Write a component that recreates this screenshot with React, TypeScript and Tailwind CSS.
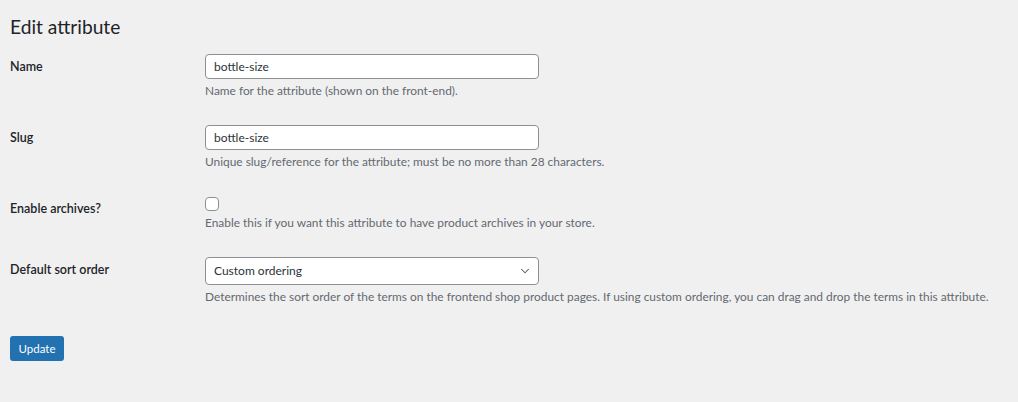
import { ChevronDown } from "lucide-react";

const font = { fontFamily: 'Lato, "Liberation Sans", sans-serif' };

function Row({
  label,
  children,
  note,
  className,
}: {
  label: string;
  children: React.ReactNode;
  note: string;
  className?: string;
}) {
  return (
    <div className={"flex items-start " + (className ?? "")}>
      <div className="w-[195px] shrink-0 pt-[5px] text-[12.5px] font-semibold leading-[16px] text-[#1d2327]">
        {label}
      </div>
      <div className="flex flex-col">
        {children}
        <p className="mt-[3px] whitespace-nowrap text-[11.9px] leading-[18px] text-[#646970]">{note}</p>
      </div>
    </div>
  );
}

export default function App() {
  return (
    <div className="min-h-[402px] w-full bg-[#f0f0f1] px-[10px] pt-[13px]" style={font}>
      <h1 className="text-[19.2px] font-normal leading-[27px] text-[#1d2327]">Edit attribute</h1>

      <div className="mt-[14px] flex flex-col">
        <Row label="Name" note="Name for the attribute (shown on the front-end).">
          <input
            defaultValue="bottle-size"
            className="h-[25px] w-[334px] rounded-[4px] border border-[#8c8f94] bg-white px-[8px] text-[12px] text-[#2c3338] outline-none"
          />
        </Row>

        <Row
          className="mt-[25px]"
          label="Slug"
          note="Unique slug/reference for the attribute; must be no more than 28 characters."
        >
          <input
            defaultValue="bottle-size"
            className="h-[25px] w-[334px] rounded-[4px] border border-[#8c8f94] bg-white px-[8px] text-[12px] text-[#2c3338] outline-none"
          />
        </Row>

        <Row
          className="mt-[25px]"
          label="Enable archives?"
          note="Enable this if you want this attribute to have product archives in your store."
        >
          <div className="pt-[1px]">
            <input
              type="checkbox"
              className="block h-[14px] w-[14px] appearance-none rounded-[4px] border border-[#8c8f94] bg-white"
            />
          </div>
        </Row>

        <Row
          className="mt-[25px]"
          label="Default sort order"
          note="Determines the sort order of the terms on the frontend shop product pages. If using custom ordering, you can drag and drop the terms in this attribute."
        >
          <div className="flex h-[28px] w-[334px] items-center justify-between rounded-[4px] border border-[#8c8f94] bg-white pl-[8px] pr-[6px] text-[12px] text-[#2c3338]">
            <span>Custom ordering</span>
            <ChevronDown size={14} strokeWidth={1.75} className="text-[#50575e]" />
          </div>
        </Row>
      </div>

      <button className="mt-[30px] h-[25px] w-[54px] rounded-[3px] bg-[#2271b1] text-[11.5px] text-white">
        Update
      </button>
    </div>
  );
}
